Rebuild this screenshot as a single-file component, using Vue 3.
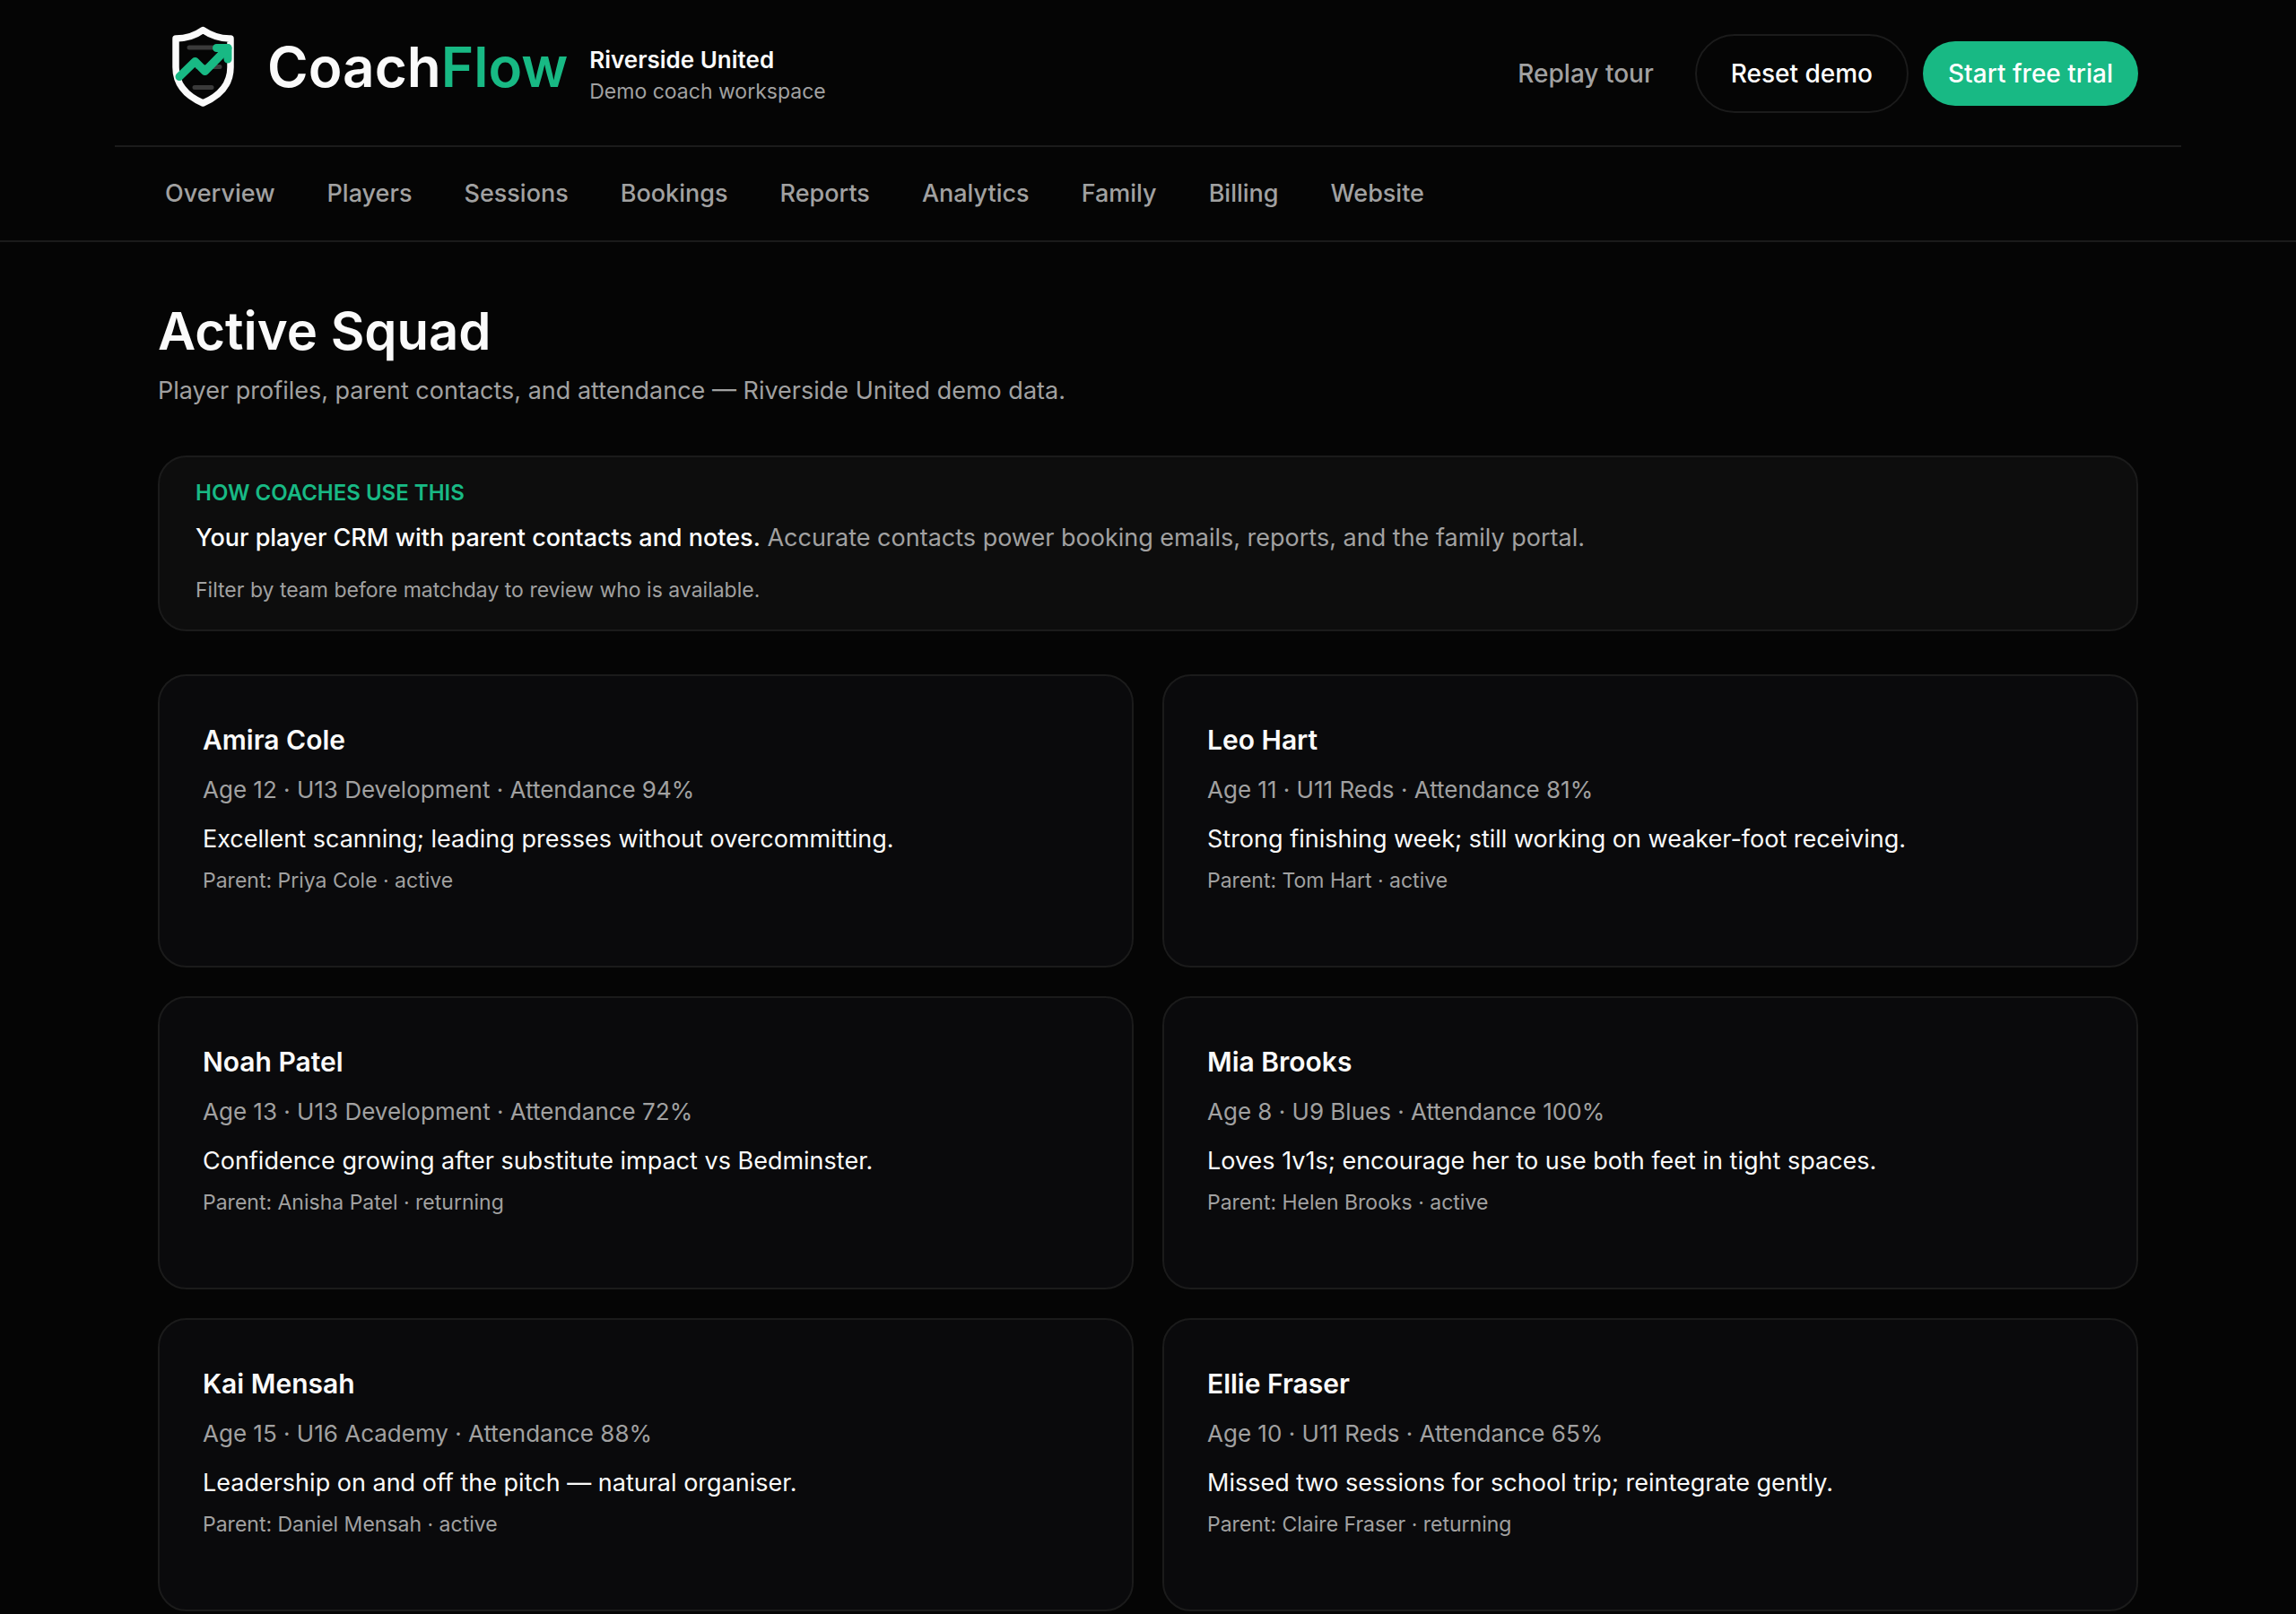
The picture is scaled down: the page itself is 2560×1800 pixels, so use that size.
<script setup>
const navItems = ['Overview', 'Players', 'Sessions', 'Bookings', 'Reports', 'Analytics', 'Family', 'Billing', 'Website']

const players = [
  { name: 'Amira Cole', age: 12, team: 'U13 Development', attendance: 94, note: 'Excellent scanning; leading presses without overcommitting.', parent: 'Priya Cole', status: 'active' },
  { name: 'Leo Hart', age: 11, team: 'U11 Reds', attendance: 81, note: 'Strong finishing week; still working on weaker-foot receiving.', parent: 'Tom Hart', status: 'active' },
  { name: 'Noah Patel', age: 13, team: 'U13 Development', attendance: 72, note: 'Confidence growing after substitute impact vs Bedminster.', parent: 'Anisha Patel', status: 'returning' },
  { name: 'Mia Brooks', age: 8, team: 'U9 Blues', attendance: 100, note: 'Loves 1v1s; encourage her to use both feet in tight spaces.', parent: 'Helen Brooks', status: 'active' },
  { name: 'Kai Mensah', age: 15, team: 'U16 Academy', attendance: 88, note: 'Leadership on and off the pitch — natural organiser.', parent: 'Daniel Mensah', status: 'active' },
  { name: 'Ellie Fraser', age: 10, team: 'U11 Reds', attendance: 65, note: 'Missed two sessions for school trip; reintegrate gently.', parent: 'Claire Fraser', status: 'returning' },
]
</script>

<template>
  <div class="page">
    <header class="site-header">
      <div class="top-bar">
        <a class="brand" href="#" aria-label="CoachFlow">
          <svg class="shield" viewBox="0 0 130 130" fill="none" aria-hidden="true">
            <path d="M66.300 23.500C58 29.500 48 33 36 33V65C36 84 48 97 66.300 105C85 97 97 84 97 65V33C85 33 75 29.500 66.300 23.500Z" stroke="#fafafa" stroke-width="7.500" stroke-linejoin="round" />
            <path d="M51 43H80M60 64.500H85M57 87.500H76" stroke="#3a3a3a" stroke-width="5" stroke-linecap="round" />
            <path d="M40 75.500L57.500 58.500L68.500 69.500L94 43.500" stroke="#18b984" stroke-width="9" stroke-linecap="round" stroke-linejoin="round" />
            <path d="M81.500 43.500H94V56" stroke="#18b984" stroke-width="9" stroke-linecap="round" stroke-linejoin="round" />
          </svg>
          <span class="wordmark">Coach<span class="accent">Flow</span></span>
        </a>
        <div class="workspace">
          <strong>Riverside United</strong>
          <span>Demo coach workspace</span>
        </div>
        <div class="actions">
          <button type="button" class="ghost">Replay tour</button>
          <button type="button" class="outline">Reset demo</button>
          <a class="primary" href="#">Start free trial</a>
        </div>
      </div>
      <nav class="nav">
        <a v-for="item in navItems" :key="item" href="#">{{ item }}</a>
      </nav>
    </header>

    <main class="content">
      <h1>Active Squad</h1>
      <p class="lead">Player profiles, parent contacts, and attendance — Riverside United demo data.</p>

      <section class="tip">
        <h2>HOW COACHES USE THIS</h2>
        <p class="tip-main"><strong>Your player CRM with parent contacts and notes.</strong> Accurate contacts power booking emails, reports, and the family portal.</p>
        <p class="tip-small">Filter by team before matchday to review who is available.</p>
      </section>

      <section class="squad">
        <article v-for="p in players" :key="p.name" class="player">
          <h3>{{ p.name }}</h3>
          <p class="meta">Age {{ p.age }} · {{ p.team }} · Attendance {{ p.attendance }}%</p>
          <p class="note">{{ p.note }}</p>
          <p class="parent">Parent: {{ p.parent }} · {{ p.status }}</p>
        </article>
      </section>
    </main>
  </div>
</template>

<style>
body {
  background: #050505;
}
</style>

<style scoped>
.page {
  min-height: 100vh;
  font-family: Inter, "Liberation Sans", sans-serif;
  font-size: 27px;
  color: #fafafa;
}
.page *,
.page {
  box-sizing: border-box;
}
h1,
h2,
h3,
p {
  margin: 0;
}
a {
  color: inherit;
  text-decoration: none;
}
.site-header {
  border-bottom: 2px solid #1b1b1b;
}
.top-bar,
.nav {
  max-width: 2304px;
  margin: 0 auto;
}
.top-bar {
  display: flex;
  align-items: center;
  padding: 2px 48px 0;
  border-bottom: 2px solid #1b1b1b;
}
.brand {
  display: flex;
  align-items: center;
  height: 160px;
  padding-bottom: 14px;
}
.shield {
  width: 130px;
  height: 130px;
  margin-left: -16px;
}
.wordmark {
  margin-left: 8px;
  font-size: 62px;
  font-weight: 600;
  line-height: 72px;
}
.accent {
  color: #18b984;
}
.workspace {
  display: flex;
  flex-direction: column;
  padding-top: 4px;
  margin-left: 24px;
}
.workspace strong {
  font-size: 26px;
  font-weight: 600;
  line-height: 36px;
}
.workspace span {
  font-size: 23px;
  line-height: 34px;
  color: #a1a1a1;
}
.actions {
  display: flex;
  align-items: center;
  gap: 16px;
  margin-left: auto;
}
.actions button,
.primary {
  font: inherit;
  font-size: 28px;
  font-weight: 500;
  line-height: 40px;
  border-radius: 44px;
}
.actions .ghost {
  padding: 16px 30px;
  border: 0;
  background: none;
  color: #a1a1a1;
}
.actions .outline {
  padding: 22px 38px;
  border: 2px solid #1b1b1b;
  background: none;
  color: #fff;
}
.primary {
  padding: 16px 28px;
  background: #18b984;
  color: #fff;
}
.nav {
  display: flex;
  gap: 58px;
  padding: 32px 56px;
  font-weight: 500;
  line-height: 40px;
  color: #a1a1a1;
}
.content {
  max-width: 2304px;
  margin: 0 auto;
  padding: 64px 48px 0;
}
h1 {
  font-size: 58px;
  font-weight: 600;
  line-height: 70px;
}
.lead {
  margin-top: 10px;
  line-height: 44px;
  color: #a1a1a1;
}
.tip {
  margin-top: 50px;
  padding: 24px 40px 26px;
  border: 2px solid #1b1b1b;
  border-radius: 32px;
  background: #0d0d0d;
}
.tip h2 {
  font-size: 24px;
  font-weight: 600;
  line-height: 32px;
  color: #18b984;
}
.tip-main {
  margin-top: 12px;
  line-height: 44px;
  color: #a1a1a1;
}
.tip-main strong {
  font-weight: 500;
  color: #fff;
}
.tip-small {
  margin-top: 18px;
  font-size: 23px;
  line-height: 36px;
  color: #a1a1a1;
}
.squad {
  display: grid;
  grid-template-columns: 1fr 1fr;
  gap: 32px;
  margin-top: 48px;
}
.player {
  padding: 48px 48px 77px;
  border: 2px solid #1b1b1b;
  border-radius: 32px;
  background: #0a0a0c;
}
.player h3 {
  font-size: 30px;
  font-weight: 600;
  line-height: 46px;
}
.meta {
  margin-top: 12px;
  font-size: 26px;
  line-height: 42px;
  color: #a1a1a1;
}
.note {
  margin-top: 12px;
  line-height: 44px;
}
.parent {
  margin-top: 6px;
  font-size: 23px;
  line-height: 36px;
  color: #a1a1a1;
}
</style>
